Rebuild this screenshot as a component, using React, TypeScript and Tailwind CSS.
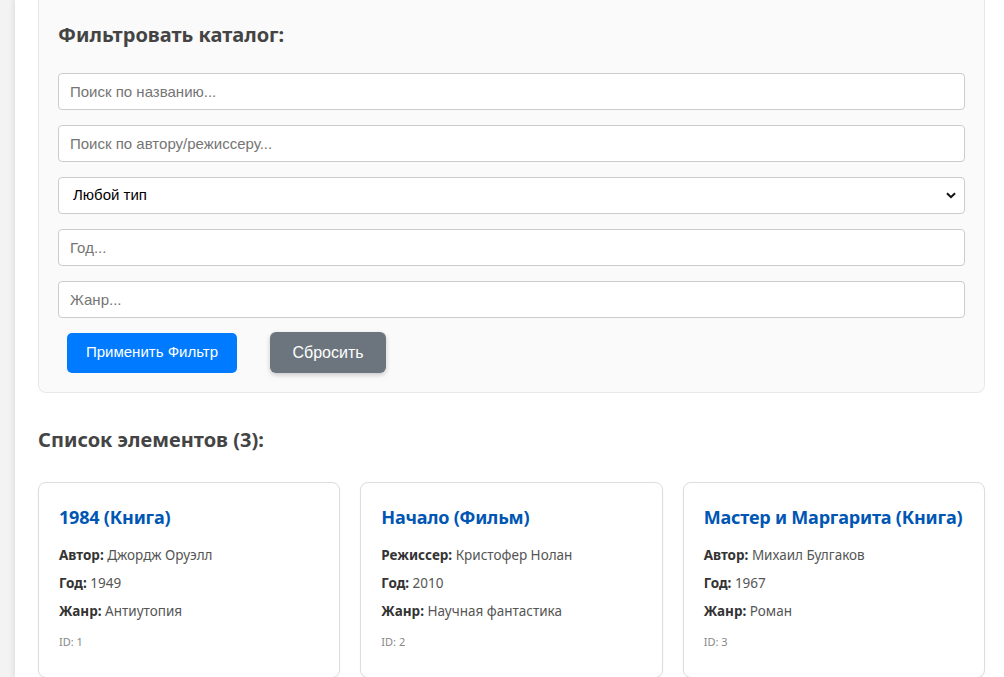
import React from "react";

type Item = {
  id: number;
  title: string;
  kind: string;
  personLabel: string;
  person: string;
  year: number;
  genre: string;
};

const items: Item[] = [
  { id: 1, title: "1984", kind: "Книга", personLabel: "Автор", person: "Джордж Оруэлл", year: 1949, genre: "Антиутопия" },
  { id: 2, title: "Начало", kind: "Фильм", personLabel: "Режиссер", person: "Кристофер Нолан", year: 2010, genre: "Научная фантастика" },
  { id: 3, title: "Мастер и Маргарита", kind: "Книга", personLabel: "Автор", person: "Михаил Булгаков", year: 1967, genre: "Роман" },
];

const sans = "font-['Noto_Sans','Open_Sans',sans-serif]";
const field =
  "h-[37px] w-full rounded-[4px] border border-[#cccccc] bg-white px-[11px] text-[15px] text-black outline-none placeholder:text-[#757575] font-['Liberation_Sans',Arial,sans-serif]";

function Card({ item }: { item: Item }) {
  return (
    <div className={`rounded-lg border border-[#dddddd] bg-white pl-5 pr-4 pt-5 pb-[27px] shadow-[0_1px_3px_rgba(0,0,0,0.04)] ${sans}`}>
      <h3 className="mb-[14px] whitespace-nowrap text-[18px] font-bold leading-7 tracking-[-0.2px] text-[#0056b3]">
        {item.title} ({item.kind})
      </h3>
      <div className="flex flex-col gap-2 text-[13.5px] leading-5 text-[#555555]">
        <p>
          <b className="text-[#333333]">{item.personLabel}:</b> {item.person}
        </p>
        <p>
          <b className="text-[#333333]">Год:</b> {item.year}
        </p>
        <p>
          <b className="text-[#333333]">Жанр:</b> {item.genre}
        </p>
      </div>
      <p className="mt-[13px] text-[11px] leading-4 text-[#888888]">ID: {item.id}</p>
    </div>
  );
}

export default function App() {
  return (
    <div className="flex min-h-[677px] overflow-hidden bg-gradient-to-r from-[#f3f3f3] to-[#e8e8e8] pl-[15px]">
      <div className="flex-1 bg-white pl-[23px] pr-[19px] shadow-[-2px_0_5px_rgba(0,0,0,0.08)]">
        <div className="rounded-b-lg border border-t-0 border-[#e8e8e8] bg-[#fafafa] px-[19px] pt-[23px] pb-[19px]">
          <h2 className={`mb-[26px] text-[20px] font-bold leading-6 text-[#444444] ${sans}`}>Фильтровать каталог:</h2>
          <div className="flex flex-col gap-[15px]">
            <input className={field} placeholder="Поиск по названию..." />
            <input className={field} placeholder="Поиск по автору/режиссеру..." />
            <div className="relative">
              <select className={`${field} appearance-none pl-[14px]`} defaultValue="">
                <option value="">Любой тип</option>
                <option value="book">Книга</option>
                <option value="film">Фильм</option>
              </select>
              <svg
                className="pointer-events-none absolute right-[9px] top-[15px]"
                width="10"
                height="7"
                viewBox="0 0 10 7"
              >
                <path d="M1 1.2 L5 5.2 L9 1.2" fill="none" stroke="#111" strokeWidth="2" />
              </svg>
            </div>
            <input className={field} placeholder="Год..." />
            <input className={field} placeholder="Жанр..." />
          </div>
          <div className="mt-[14px] flex items-center gap-[33px] pl-[9px] font-['Liberation_Sans',Arial,sans-serif]">
            <button className="h-10 w-[170px] rounded-[5px] bg-[#007bff] text-[15px] text-white">Применить Фильтр</button>
            <button className="h-[41px] w-[116px] rounded-[6px] bg-[#6c757d] text-[16px] text-white shadow-[0_2px_5px_rgba(0,0,0,0.2)]">
              Сбросить
            </button>
          </div>
        </div>

        <h2 className={`mt-[35px] mb-[30px] text-[20px] font-bold leading-6 text-[#444444] ${sans}`}>
          Список элементов ({items.length}):
        </h2>
        <div className="grid grid-cols-3 gap-5">
          {items.map((item) => (
            <Card key={item.id} item={item} />
          ))}
        </div>
      </div>
    </div>
  );
}
